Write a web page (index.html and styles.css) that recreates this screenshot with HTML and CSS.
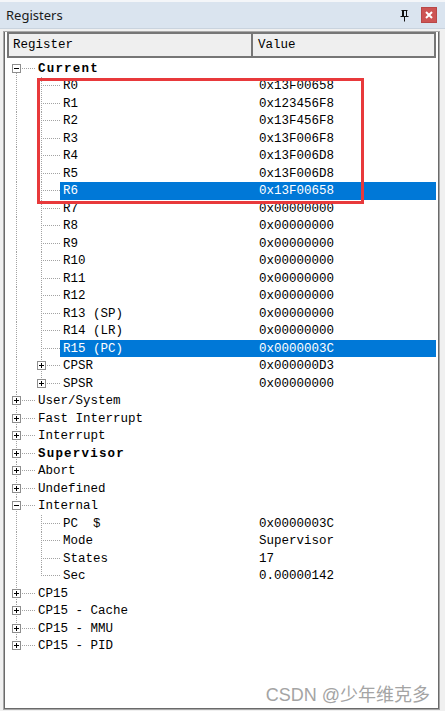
FILE: index.html
```html
<!DOCTYPE html>
<html>
<head>
<meta charset="utf-8">
<link rel="stylesheet" href="styles.css">
</head>
<body>
<div class="window">
  <div class="titlebar">
    <span class="title">Registers</span>
    <span class="pin"><svg width="9" height="12" viewBox="0 0 9 12"><path d="M1.5 0.5h6 M2.5 0.5v6 M6.5 0.5v6 M3.5 0.5v6 M0.5 6.5h8 M4.5 6.5v5" stroke="#111" stroke-width="1" fill="none"/></svg></span>
    <span class="close"><svg width="8" height="8" viewBox="0 0 8 8"><path d="M1 1L7 7M7 1L1 7" stroke="#fff" stroke-width="2"/></svg></span>
  </div>
  <div class="panel">
    <div class="frame">
      <div class="header">
        <div class="hcell hreg">Register</div>
        <div class="hcell hval">Value</div>
      </div>
      <div class="tree">
        <div class="row"><div class="name"><span class="cn rf"><i class="bx minus"></i></span><span class="lb bold">Current</span></div><div class="val"></div></div>
        <div class="row"><div class="name"><span class="av"></span><span class="cn cm"></span><span class="lb">R0</span></div><div class="val">0x13F00658</div></div>
        <div class="row"><div class="name"><span class="av"></span><span class="cn cm"></span><span class="lb">R1</span></div><div class="val">0x123456F8</div></div>
        <div class="row"><div class="name"><span class="av"></span><span class="cn cm"></span><span class="lb">R2</span></div><div class="val">0x13F456F8</div></div>
        <div class="row"><div class="name"><span class="av"></span><span class="cn cm"></span><span class="lb">R3</span></div><div class="val">0x13F006F8</div></div>
        <div class="row"><div class="name"><span class="av"></span><span class="cn cm"></span><span class="lb">R4</span></div><div class="val">0x13F006D8</div></div>
        <div class="row"><div class="name"><span class="av"></span><span class="cn cm"></span><span class="lb">R5</span></div><div class="val">0x13F006D8</div></div>
        <div class="row sel"><div class="name"><span class="av"></span><span class="cn cm"></span><span class="lb">R6</span></div><div class="val">0x13F00658</div></div>
        <div class="row"><div class="name"><span class="av"></span><span class="cn cm"></span><span class="lb">R7</span></div><div class="val">0x00000000</div></div>
        <div class="row"><div class="name"><span class="av"></span><span class="cn cm"></span><span class="lb">R8</span></div><div class="val">0x00000000</div></div>
        <div class="row"><div class="name"><span class="av"></span><span class="cn cm"></span><span class="lb">R9</span></div><div class="val">0x00000000</div></div>
        <div class="row"><div class="name"><span class="av"></span><span class="cn cm"></span><span class="lb">R10</span></div><div class="val">0x00000000</div></div>
        <div class="row"><div class="name"><span class="av"></span><span class="cn cm"></span><span class="lb">R11</span></div><div class="val">0x00000000</div></div>
        <div class="row"><div class="name"><span class="av"></span><span class="cn cm"></span><span class="lb">R12</span></div><div class="val">0x00000000</div></div>
        <div class="row"><div class="name"><span class="av"></span><span class="cn cm"></span><span class="lb">R13 (SP)</span></div><div class="val">0x00000000</div></div>
        <div class="row"><div class="name"><span class="av"></span><span class="cn cm"></span><span class="lb">R14 (LR)</span></div><div class="val">0x00000000</div></div>
        <div class="row sel"><div class="name"><span class="av"></span><span class="cn cm"></span><span class="lb">R15 (PC)</span></div><div class="val">0x0000003C</div></div>
        <div class="row"><div class="name"><span class="av"></span><span class="cn cm"><i class="bx plus"></i></span><span class="lb">CPSR</span></div><div class="val">0x000000D3</div></div>
        <div class="row"><div class="name"><span class="av"></span><span class="cn cl"><i class="bx plus"></i></span><span class="lb">SPSR</span></div><div class="val">0x00000000</div></div>
        <div class="row"><div class="name"><span class="cn rm"><i class="bx plus"></i></span><span class="lb">User/System</span></div><div class="val"></div></div>
        <div class="row"><div class="name"><span class="cn rm"><i class="bx plus"></i></span><span class="lb">Fast Interrupt</span></div><div class="val"></div></div>
        <div class="row"><div class="name"><span class="cn rm"><i class="bx plus"></i></span><span class="lb">Interrupt</span></div><div class="val"></div></div>
        <div class="row"><div class="name"><span class="cn rm"><i class="bx plus"></i></span><span class="lb bold">Supervisor</span></div><div class="val"></div></div>
        <div class="row"><div class="name"><span class="cn rm"><i class="bx plus"></i></span><span class="lb">Abort</span></div><div class="val"></div></div>
        <div class="row"><div class="name"><span class="cn rm"><i class="bx plus"></i></span><span class="lb">Undefined</span></div><div class="val"></div></div>
        <div class="row"><div class="name"><span class="cn rm"><i class="bx minus"></i></span><span class="lb">Internal</span></div><div class="val"></div></div>
        <div class="row"><div class="name"><span class="av"></span><span class="cn cm"></span><span class="lb">PC  $</span></div><div class="val">0x0000003C</div></div>
        <div class="row"><div class="name"><span class="av"></span><span class="cn cm"></span><span class="lb">Mode</span></div><div class="val">Supervisor</div></div>
        <div class="row"><div class="name"><span class="av"></span><span class="cn cm"></span><span class="lb">States</span></div><div class="val">17</div></div>
        <div class="row"><div class="name"><span class="av"></span><span class="cn cl"></span><span class="lb">Sec</span></div><div class="val">0.00000142</div></div>
        <div class="row"><div class="name"><span class="cn rm"><i class="bx plus"></i></span><span class="lb">CP15</span></div><div class="val"></div></div>
        <div class="row"><div class="name"><span class="cn rm"><i class="bx plus"></i></span><span class="lb">CP15 - Cache</span></div><div class="val"></div></div>
        <div class="row"><div class="name"><span class="cn rm"><i class="bx plus"></i></span><span class="lb">CP15 - MMU</span></div><div class="val"></div></div>
        <div class="row"><div class="name"><span class="cn rl"><i class="bx plus"></i></span><span class="lb">CP15 - PID</span></div><div class="val"></div></div>
      </div>
    </div>
  </div>
  <div class="annot"></div>
  <div class="watermark">CSDN @少年维克多</div>
</div>
</body>
</html>
```
FILE: styles.css
```css
html, body {
  margin: 0;
  padding: 0;
  background: #f0f0f0;
}
.window {
  position: relative;
  width: 445px;
  height: 711px;
  overflow: hidden;
  background: #f0f0f0;
}
.titlebar {
  height: 29px;
  box-sizing: border-box;
  display: flex;
  align-items: center;
  padding: 1px 8px 0 6px;
  background: linear-gradient(#f4f6f9 0 2px, #dae4ef 2px 28px, #c9d3de 28px);
}
.title {
  flex: 1;
  font-family: "Noto Sans", "Liberation Sans", sans-serif;
  font-size: 13px;
  color: #1b1b1b;
}
.pin {
  display: flex;
  margin-right: 12px;
  margin-top: 1px;
}
.close {
  width: 16px;
  height: 16px;
  box-sizing: border-box;
  background: #cd5453;
  border: 1px solid #b84747;
  display: flex;
  align-items: center;
  justify-content: center;
}
.panel {
  margin: 2px 5px 0 3px;
  height: 679px;
  box-sizing: border-box;
  border: 1px solid #a8a8a8;
  background: #fff;
}
.frame {
  height: 100%;
  box-sizing: border-box;
  border: 1px solid #6a6a6a;
  border-top: 0;
  padding: 0 2px 2px 2px;
  background: #fff;
}
.header {
  height: 26px;
  box-sizing: border-box;
  display: grid;
  grid-template-columns: 244px 1fr;
  border: 2px solid #767676;
  background: #efefef;
  font-family: "Liberation Mono", "Courier New", monospace;
  font-size: 12.5px;
  color: #000;
}
.hcell {
  line-height: 23px;
}
.hreg {
  padding-left: 4px;
  border-right: 2px solid #767676;
}
.hval {
  padding-left: 5px;
}
.tree {
  margin-top: 1.5px;
  font-family: "Liberation Mono", "Courier New", monospace;
  font-size: 12.5px;
  color: #000;
  --dv: repeating-linear-gradient(to bottom, #a3a3a3 0 1px, transparent 1px 2px);
  --dh: repeating-linear-gradient(to right, #a3a3a3 0 1px, transparent 1px 2px);
}
.row {
  height: 17.5px;
  display: grid;
  grid-template-columns: 245px 1fr;
}
.name {
  display: flex;
  height: 17.5px;
}
.av {
  flex: none;
  width: 25px;
  height: 100%;
  background-image: var(--dv);
  background-repeat: no-repeat;
  background-size: 1px 100%;
  background-position: 9px 0;
}
.cn {
  flex: none;
  width: 28px;
  height: 100%;
  display: flex;
  align-items: center;
  background-repeat: no-repeat;
}
.cm, .rm {
  background-image: var(--dh), var(--dv);
  background-size: 19px 1px, 1px 100%;
  background-position: 9px 50%, 9px 0;
}
.rf {
  background-image: var(--dh), var(--dv);
  background-size: 19px 1px, 1px 50%;
  background-position: 9px 50%, 9px 100%;
}
.rl, .cl {
  background-image: var(--dh), var(--dv);
  background-size: 19px 1px, 1px 50%;
  background-position: 9px 50%, 9px 0;
}
.bx {
  display: block;
  width: 9px;
  height: 9px;
  box-sizing: border-box;
  margin-left: 5px;
  border: 1px solid #8e8e8e;
  background: #fff;
}
.bx.minus {
  background: linear-gradient(#000, #000) center / 5px 1px no-repeat, #fff;
}
.bx.plus {
  background: linear-gradient(#000, #000) center / 5px 1px no-repeat,
              linear-gradient(#000, #000) center / 1px 5px no-repeat, #fff;
}
.lb {
  flex: 1;
  padding-left: 3px;
  padding-top: 1px;
  line-height: 16.5px;
  white-space: pre;
}
.bold {
  font-weight: bold;
  letter-spacing: 1.2px;
}
.val {
  padding-left: 7px;
  padding-top: 1px;
  line-height: 16.5px;
  white-space: pre;
}
.sel .lb, .sel .val {
  background: #0078d7;
  color: #fff;
}
.annot {
  position: absolute;
  left: 37px;
  top: 78px;
  width: 327px;
  height: 126px;
  box-sizing: border-box;
  border: 3px solid #e8393b;
}
.watermark {
  position: absolute;
  right: 15px;
  top: 680px;
  font-family: "Liberation Sans", "Noto Sans CJK SC", sans-serif;
  font-size: 18px;
  color: #a4a4a4;
}
```
